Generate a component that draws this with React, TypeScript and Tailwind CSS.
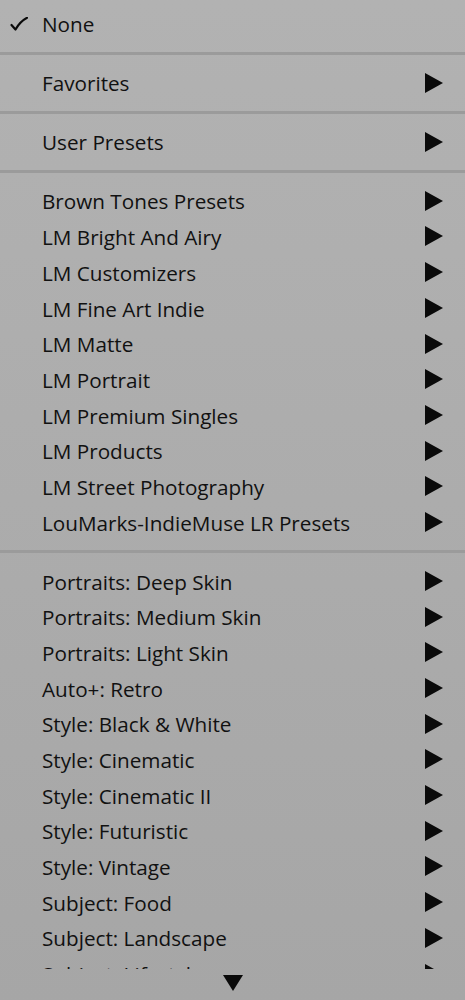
const groups: string[][] = [
  ['Favorites'],
  ['User Presets'],
  [
    'Brown Tones Presets',
    'LM Bright And Airy',
    'LM Customizers',
    'LM Fine Art Indie',
    'LM Matte',
    'LM Portrait',
    'LM Premium Singles',
    'LM Products',
    'LM Street Photography',
    'LouMarks-IndieMuse LR Presets',
  ],
  [
    'Portraits: Deep Skin',
    'Portraits: Medium Skin',
    'Portraits: Light Skin',
    'Auto+: Retro',
    'Style: Black & White',
    'Style: Cinematic',
    'Style: Cinematic II',
    'Style: Futuristic',
    'Style: Vintage',
    'Subject: Food',
    'Subject: Landscape',
    'Subject: Lifestyle',
    'Subject: People',
  ],
]

function Arrow() {
  return (
    <svg width="18" height="20" viewBox="0 0 18 20" className="shrink-0">
      <polygon points="0,0 18,10 0,20" fill="#0a0a0a" />
    </svg>
  )
}

function Check() {
  return (
    <svg width="18" height="14" viewBox="0 0 18 14">
      <path d="M1.5 8 L5.5 12.5 Q10 4.5 17 0.8" fill="none" stroke="#0a0a0a" strokeWidth="2.2" strokeLinecap="round" strokeLinejoin="round" />
    </svg>
  )
}

function Separator() {
  return (
    <div className="flex h-[23.3px] flex-col justify-center">
      <div className="h-[3px] bg-[#9b9b9b]" />
    </div>
  )
}

function Row({ label, check, arrow = true }: { label: string; check?: boolean; arrow?: boolean }) {
  return (
    <div className="flex h-[35.7px] shrink-0 items-center pr-[22px]">
      <div className="flex w-[42px] shrink-0 pl-[10px]">{check && <Check />}</div>
      <div className="flex-1 whitespace-nowrap pt-[2px] text-[20.7px] leading-none">{label}</div>
      {arrow && <Arrow />}
    </div>
  )
}

export default function App() {
  return (
    <div
      className="flex h-[1000px] w-[465px] flex-col overflow-hidden bg-gradient-to-b from-[#b2b2b2] to-[#a6a6a6] text-[#111]"
      style={{ fontFamily: '"Open Sans", "Noto Sans", sans-serif' }}
    >
      <div className="h-[969px] overflow-hidden pt-[6px]">
        <Row label="None" check arrow={false} />
        {groups.map((g, i) => (
          <div key={i}>
            <Separator />
            {g.map((label) => (
              <Row key={label} label={label} />
            ))}
          </div>
        ))}
      </div>
      <div className="flex flex-1 items-center justify-center pb-[4px]">
        <svg width="20" height="16" viewBox="0 0 20 16">
          <polygon points="0,0 20,0 10,16" fill="#0a0a0a" />
        </svg>
      </div>
    </div>
  )
}
